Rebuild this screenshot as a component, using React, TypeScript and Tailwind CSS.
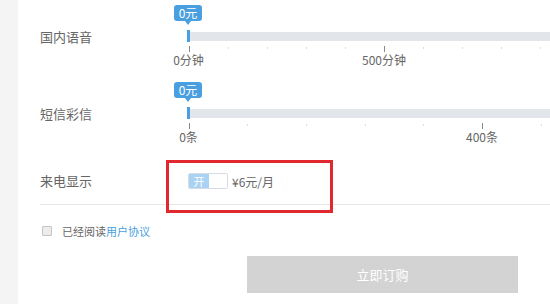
import React from 'react';

type Tick = { at: number; label?: string };

const sliders = [
  {
    name: '国内语音',
    step: 39.1,
    ticks: [
      { at: 0, label: '0分钟' },
      { at: 1 }, { at: 2 }, { at: 3 }, { at: 4 },
      { at: 5, label: '500分钟' },
      { at: 6 }, { at: 7 }, { at: 8 }, { at: 9 },
    ] as Tick[],
  },
  {
    name: '短信彩信',
    step: 58.7,
    ticks: [
      { at: 0, label: '0条' },
      { at: 1 }, { at: 2 }, { at: 3 }, { at: 4 },
      { at: 5, label: '400条' },
      { at: 6 },
    ] as Tick[],
  },
];

function Slider({ step, ticks }: { step: number; ticks: Tick[] }) {
  return (
    <div className="flex-1 min-w-0 flex flex-col">
      {/* value bubble */}
      <div className="h-[24px]">
        <div className="relative mt-[-1px] ml-[-13px] w-[28px] h-[16px] rounded-[3px] bg-[#4a9fe1] text-white text-[12px] leading-[16px] text-center">
          0元
          <span className="absolute left-1/2 -translate-x-1/2 top-full w-0 h-0 border-l-[3px] border-r-[3px] border-t-[4px] border-l-transparent border-r-transparent border-t-[#4a9fe1]" />
        </div>
      </div>
      {/* track */}
      <div className="h-[12px] flex items-center">
        <div className="w-[3px] h-[12px] bg-[#4a9fe1]" />
        <div className="flex-1 h-[9px] bg-[#e2e5ea]" />
      </div>
      {/* scale */}
      <div className="relative h-[26px]">
        {ticks.map((t) => {
          const x = 1.5 + t.at * step;
          return (
            <React.Fragment key={t.at}>
              {t.label ? (
                <>
                  <div className="absolute top-[4px] w-px h-[6px] bg-[#888]" style={{ left: x }} />
                  <div
                    className="absolute top-[12px] -translate-x-1/2 whitespace-nowrap text-[12px] leading-[12px] text-[#666]"
                    style={{ left: x }}
                  >
                    {t.label}
                  </div>
                </>
              ) : (
                <div className="absolute top-[5px] w-px h-[2px] bg-[#dcdcdc]" style={{ left: x }} />
              )}
            </React.Fragment>
          );
        })}
      </div>
    </div>
  );
}

export default function App() {
  return (
    <div className="relative w-[550px] h-[304px] overflow-hidden flex bg-white font-['Noto_Sans_CJK_SC',sans-serif]">
      <div className="w-[18px] flex-none bg-[#f4f4f4]" />

      <div className="flex-1 min-w-0 flex flex-col pl-[22px]">
        {sliders.map((s) => (
          <div key={s.name} className="h-[77px] pt-[6px] flex items-start">
            <div className="w-[147px] flex-none mt-[23px] text-[13px] leading-[16px] text-[#666]">{s.name}</div>
            <Slider step={s.step} ticks={s.ticks} />
          </div>
        ))}

        {/* caller id */}
        <div className="h-[50px] pt-[19px] flex items-start">
          <div className="w-[148px] flex-none text-[13px] leading-[16px] text-[#666]">来电显示</div>
          <div className="flex items-center">
            <div className="flex w-[40px] h-[16px] border border-[#d6dce3] rounded-[2px] overflow-hidden">
              <div className="w-[20px] bg-[#a9d2f3] text-white text-[11px] leading-[14px] text-center">开</div>
              <div className="flex-1 bg-white" />
            </div>
            <span className="ml-[4px] text-[12px] leading-[15px] text-[#666]">¥6元/月</span>
          </div>
        </div>

        <div className="h-px bg-[#e6e6e6]" />

        {/* agreement */}
        <div className="mt-[18px] h-[16px] flex items-center pl-[2px]">
          <div className="w-[10px] h-[10px] border border-[#c4c4c4] bg-[#ececec] rounded-[1px]" />
          <span className="ml-[10px] text-[11px] leading-[16px] text-[#666]">
            已经阅读<span className="text-[#4a9fe1]">用户协议</span>
          </span>
        </div>

        <button className="mt-[17px] ml-[207px] w-[271px] h-[37px] bg-[#d3d3d3] text-white text-[13px]">
          立即订购
        </button>
      </div>

      {/* annotation */}
      <div className="absolute left-[166px] top-[160px] w-[167px] h-[53px] border-[3px] border-[#e0282e]" />
    </div>
  );
}
